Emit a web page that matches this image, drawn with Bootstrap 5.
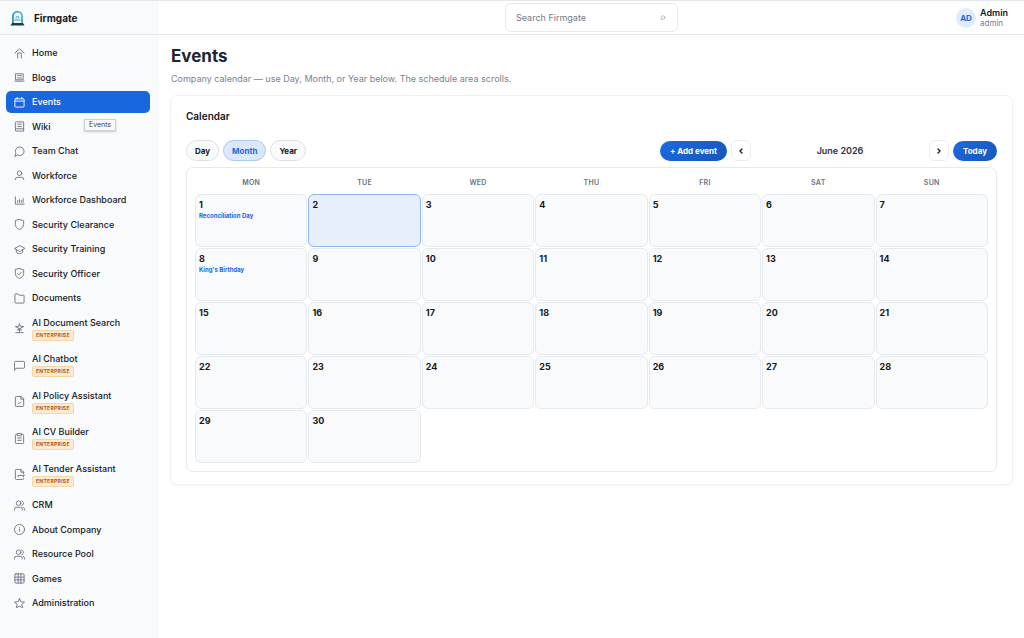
<!DOCTYPE html>
<html lang="en">
<head>
<meta charset="utf-8">
<meta name="viewport" content="width=device-width, initial-scale=1">
<title>Firmgate – Events</title>
<link href="https://cdn.jsdelivr.net/npm/bootstrap@5.3.0/dist/css/bootstrap.min.css" rel="stylesheet">
<style>
  :root { --fg-blue: #1967df; --fg-line: #e6e9ed; --fg-soft: #f8fafc; --fg-ink: #15181e; --fg-mute: #7a8290; }
  body { font-family: Inter, "Liberation Sans", sans-serif; font-size: 9px; line-height: 12px; color: var(--fg-ink); background: #fff; }
  a { color: inherit; text-decoration: none; }
  .app-shell { border-top: 1px solid #e4e5e8; }
  .side-col { width: 159px; background: var(--fg-soft); }
  .top-strip { height: 34px; border-bottom: 1px solid var(--fg-line); }
  .brand-link { font-size: 10px; font-weight: 700; gap: 9px; padding-left: 10px; }
  .side-nav { padding: 7px 9px 24px 6px; }
  .side-item { position: relative; display: flex; align-items: center; gap: 6px; height: 22px; padding-left: 7px; border-radius: 5px; font-weight: 500; }
  .side-item.tall { height: 34px; }
  .side-item.current { background: var(--fg-blue); color: #fff; }
  .side-item svg { width: 13px; height: 13px; padding: 1px; flex: none; stroke: #6b7484; }
  .side-item.current svg { stroke: #fff; }
  svg.line-icon { fill: none; stroke-width: 2; stroke-linecap: round; stroke-linejoin: round; }
  .plan-tag { display: block; width: fit-content; margin-top: 1px; padding: 0 3px; border: 1px solid #f8d5a5; border-radius: 2px; background: #feebcf; color: #b9530f; font-size: 5px; line-height: 9px; font-weight: 700; letter-spacing: .3px; }
  .hover-tip { position: absolute; left: 78px; top: 28px; z-index: 2; padding: 0 4px; border: 1px solid #cfd1d4; background: #f8f8f8; color: #444; font-size: 7px; line-height: 10px; font-weight: 400; box-shadow: 0 1px 2px #0003; }
  .search-box { width: 173px; height: 29px; border: 1px solid var(--fg-line); border-radius: 6px; padding: 0 11px 0 10px; }
  .search-box input { min-width: 0; border: 0; outline: 0; background: none; color: var(--fg-ink); }
  .search-box input::placeholder { color: #747b87; opacity: 1; }
  .search-box svg { width: 7px; height: 7px; stroke: #8b919b; }
  .user-box { gap: 4px; padding-right: 16px; line-height: 10px; }
  .user-pic { width: 20px; height: 20px; border-radius: 50%; background: #e0ecfd; color: #2268d8; font-size: 8px; font-weight: 700; }
  .user-role { font-size: 8px; color: var(--fg-mute); }
  .page-area { padding: 9px 11px 24px 11px; }
  .page-intro { padding-left: 1px; margin-bottom: 10px; }
  h1 { margin-bottom: 5px; font-size: 17px; line-height: 24px; font-weight: 700; color: #1c2436; }
  .intro { color: var(--fg-mute); }
  .panel-card { border: 1px solid #eff1f4; border-radius: 7px; padding: 12px 15px; box-shadow: 0 1px 2px #1018280a; }
  h2 { font-size: 10px; line-height: 16px; font-weight: 600; }
  .pill { height: 21px; padding: 0 8px; border: 1px solid #dde1e7; border-radius: 11px; background: var(--fg-soft); color: var(--fg-ink); font-size: 8px; line-height: 12px; font-weight: 700; }
  .pill.picked { background: #dbe8fb; border-color: #a9c8f4; color: var(--fg-blue); }
  .pill.solid { height: 20px; padding: 0 10px; border: 0; background: linear-gradient(135deg, #1c69e0, #1757b8); color: #fff; }
  .step { width: 20px; height: 21px; padding: 0; border: 1px solid #eaecf0; border-radius: 6px; background: #fff; }
  .step svg { width: 8px; height: 8px; stroke: #15181e; stroke-width: 4; }
  .month-name { width: 170px; font-size: 9px; font-weight: 600; color: #2b3242; }
  .view-bar { margin: 16px 0 6px; }
  .month-frame { border: 1px solid var(--fg-line); border-radius: 7px; padding: 7px; }
  .month-grid { width: 100%; table-layout: fixed; border-collapse: separate; border-spacing: 1px; }
  .month-grid th { height: 17px; padding: 0 0 3px; text-align: center; font-size: 7px; line-height: 12px; font-weight: 600; letter-spacing: .3px; color: #6b7280; }
  .month-grid td { height: 53px; padding: 4px 3px; vertical-align: top; border: 1px solid var(--fg-line); border-radius: 6px; background: var(--fg-soft); font-weight: 700; }
  .month-grid td.today { background: #e7effd; border-color: #8fb6f0; }
  .month-grid td:empty { visibility: hidden; }
  .month-grid a { display: block; color: var(--fg-blue); font-size: 6px; line-height: 10px; }
</style>
<script src="https://cdn.jsdelivr.net/npm/bootstrap@5.3.0/dist/js/bootstrap.bundle.min.js"></script>
</head>
<body>
<div class="app-shell d-flex min-vh-100">
  <aside class="side-col d-flex flex-column flex-shrink-0">
    <div class="top-strip d-flex align-items-center flex-shrink-0">
      <a class="brand-link d-flex align-items-center" href="#">
        <svg width="15" height="17" viewBox="0 0 30 34" fill="none">
          <defs><linearGradient id="arch" x1="0" y1="1" x2="1" y2="0"><stop stop-color="#2389a6"/><stop offset="1" stop-color="#35c3dc"/></linearGradient></defs>
          <path d="M6 28V14a9 9 0 0 1 18 0v14" stroke="url(#arch)" stroke-width="3.500" fill="#f2fbfd"/>
          <path d="M12 19v-1a3 3 0 0 1 6 0v1M9 22h12" stroke="#2e9fc0" stroke-width="2"/>
          <path d="M4 28h22l3 5H1z" fill="#1f3c4f"/>
        </svg>
        <span>Firmgate</span>
      </a>
    </div>
    <nav class="side-nav d-flex flex-column justify-content-between flex-fill" aria-label="Main">
      <a class="side-item" href="#"><svg class="line-icon" viewBox="0 0 24 24"><path d="M2 11 12 2l10 9M8 22V11h8v11"/></svg>Home</a>
      <a class="side-item" href="#"><svg class="line-icon" viewBox="0 0 24 24"><path d="M4 4h16v13H4zM8 8h8M8 13h8M2 20h20"/></svg>Blogs</a>
      <a class="side-item current" href="#" aria-current="page"><svg class="line-icon" viewBox="0 0 24 24"><rect x="2" y="4" width="20" height="18" rx="2"/><path d="M2 9h20M7 1v3M17 1v3"/></svg>Events<span class="hover-tip" role="tooltip">Events</span></a>
      <a class="side-item" href="#"><svg class="line-icon" viewBox="0 0 24 24"><path d="M21 17V2H5a2 2 0 0 0-2 2v16a2 2 0 0 0 2 2h16v-5H5a2 2 0 0 0-2 2M8 7h8M8 12h8"/></svg>Wiki</a>
      <a class="side-item" href="#"><svg class="line-icon" viewBox="0 0 24 24"><path d="M2 22l2-6A9.500 9.500 0 1 1 8 20z"/></svg>Team Chat</a>
      <a class="side-item" href="#"><svg class="line-icon" viewBox="0 0 24 24"><circle cx="12" cy="7" r="5"/><path d="M3 21v-1a4 4 0 0 1 4-4h10a4 4 0 0 1 4 4v1"/></svg>Workforce</a>
      <a class="side-item" href="#"><svg class="line-icon" viewBox="0 0 24 24"><path d="M3 4v16h19M8 16v-4M12 16V10M16 16v-4M20 16V8"/></svg>Workforce Dashboard</a>
      <a class="side-item" href="#"><svg class="line-icon" viewBox="0 0 24 24"><path d="M12 1l9 3v8c0 5-4 9-9 11-5-2-9-6-9-11V4z"/></svg>Security Clearance</a>
      <a class="side-item" href="#"><svg class="line-icon" viewBox="0 0 24 24"><path d="M12 4 1 10l11 6 11-6zM5 12v6c4 4 10 4 14 0v-6"/></svg>Security Training</a>
      <a class="side-item" href="#"><svg class="line-icon" viewBox="0 0 24 24"><path d="M12 1l9 3v8c0 5-4 9-9 11-5-2-9-6-9-11V4zM8 12l3 3 5-6"/></svg>Security Officer</a>
      <a class="side-item" href="#"><svg class="line-icon" viewBox="0 0 24 24"><path d="M2 3a1 1 0 0 1 1-1h6l3 3h9a1 1 0 0 1 1 1v14a2 2 0 0 1-2 2H4a2 2 0 0 1-2-2z"/></svg>Documents</a>
      <a class="side-item tall" href="#"><svg class="line-icon" viewBox="0 0 24 24"><path d="M12 2l2 5 7 1-7 3 2 5-4-3-4 3 2-5-7-3 7-1zM12 13v7M4 21h16"/></svg><span>AI Document Search<span class="plan-tag">ENTERPRISE</span></span></a>
      <a class="side-item tall" href="#"><svg class="line-icon" viewBox="0 0 24 24"><path d="M1 22V5a2 2 0 0 1 2-2h18a2 2 0 0 1 2 2v11a2 2 0 0 1-2 2H5z"/></svg><span>AI Chatbot<span class="plan-tag">ENTERPRISE</span></span></a>
      <a class="side-item tall" href="#"><svg class="line-icon" viewBox="0 0 24 24"><path d="M15 1H5a2 2 0 0 0-2 2v18a2 2 0 0 0 2 2h14a2 2 0 0 0 2-2V7zv6h6M9 15l2 2 4-4"/></svg><span>AI Policy Assistant<span class="plan-tag">ENTERPRISE</span></span></a>
      <a class="side-item tall" href="#"><svg class="line-icon" viewBox="0 0 24 24"><path d="M8 3H5a2 2 0 0 0-2 2v16a2 2 0 0 0 2 2h14a2 2 0 0 0 2-2V5a2 2 0 0 0-2-2h-3M8 1h8v5H8zM8 11h8M8 16h8"/></svg><span>AI CV Builder<span class="plan-tag">ENTERPRISE</span></span></a>
      <a class="side-item tall" href="#"><svg class="line-icon" viewBox="0 0 24 24"><path d="M21 11V7l-6-6H5a2 2 0 0 0-2 2v18a2 2 0 0 0 2 2h14a2 2 0 0 0 2-2v-1M15 1v6h6M9 17v-3h14l-3 3"/></svg><span>AI Tender Assistant<span class="plan-tag">ENTERPRISE</span></span></a>
      <a class="side-item" href="#"><svg class="line-icon" viewBox="0 0 24 24"><circle cx="10" cy="7" r="5"/><path d="M1 22v-2a4 4 0 0 1 4-4h9a4 4 0 0 1 4 4v2M17 2c5 1 5 9 0 10M20 16c2 0 3 2 3 6"/></svg>CRM</a>
      <a class="side-item" href="#"><svg class="line-icon" viewBox="0 0 24 24"><circle cx="12" cy="12" r="11"/><path d="M12 11v5M12 8v.1"/></svg>About Company</a>
      <a class="side-item" href="#"><svg class="line-icon" viewBox="0 0 24 24"><circle cx="10" cy="7" r="5"/><path d="M1 22v-2a4 4 0 0 1 4-4h9a4 4 0 0 1 4 4v2M17 2c5 1 5 9 0 10M20 16c2 0 3 2 3 6"/></svg>Resource Pool</a>
      <a class="side-item" href="#"><svg class="line-icon" viewBox="0 0 24 24"><rect x="2" y="2" width="20" height="20" rx="2"/><path d="M2 9h20M2 15h20M9 2v20M15 2v20"/></svg>Games</a>
      <a class="side-item" href="#"><svg class="line-icon" viewBox="0 0 24 24"><path d="M12 1l3 7 8 1-6 5 2 7-7-3-7 3 2-7-6-5 8-1z"/></svg>Administration</a>
    </nav>
  </aside>
  <div class="flex-fill d-flex flex-column">
    <header class="top-strip row g-0 align-items-center">
      <div class="col"></div>
      <form class="search-box d-flex align-items-center col-auto" role="search">
        <input class="flex-fill p-0" type="text" placeholder="Search Firmgate" aria-label="Search Firmgate">
        <svg class="line-icon" viewBox="0 0 24 24"><circle cx="14" cy="12" r="6"/><path d="M9 16l-4 4"/></svg>
      </form>
      <div class="col d-flex justify-content-end">
        <a class="user-box d-flex align-items-center" href="#">
          <span class="user-pic d-flex align-items-center justify-content-center">AD</span>
          <span><span class="d-block fw-semibold">Admin</span><span class="user-role d-block">admin</span></span>
        </a>
      </div>
    </header>
    <main class="page-area">
      <div class="page-intro">
        <h1>Events</h1>
        <p class="intro mb-0">Company calendar — use Day, Month, or Year below. The schedule area scrolls.</p>
      </div>
      <section class="panel-card">
        <h2 class="mb-0">Calendar</h2>
        <div class="view-bar d-flex align-items-center justify-content-between">
          <div class="d-flex gap-1">
            <button type="button" class="pill">Day</button>
            <button type="button" class="pill picked" aria-pressed="true">Month</button>
            <button type="button" class="pill">Year</button>
          </div>
          <div class="d-flex align-items-center gap-1">
            <button type="button" class="pill solid">+ Add event</button>
            <button type="button" class="step" aria-label="Previous month"><svg class="line-icon" viewBox="0 0 24 24"><path d="M15 6l-6 6 6 6"/></svg></button>
            <span class="month-name text-center">June 2026</span>
            <button type="button" class="step" aria-label="Next month"><svg class="line-icon" viewBox="0 0 24 24"><path d="M9 6l6 6-6 6"/></svg></button>
            <button type="button" class="pill solid">Today</button>
          </div>
        </div>
        <div class="month-frame">
          <table class="month-grid">
            <thead><tr><th>MON</th><th>TUE</th><th>WED</th><th>THU</th><th>FRI</th><th>SAT</th><th>SUN</th></tr></thead>
            <tbody>
              <tr><td>1<a href="#">Reconciliation Day</a></td><td class="today">2</td><td>3</td><td>4</td><td>5</td><td>6</td><td>7</td></tr>
              <tr><td>8<a href="#">King's Birthday</a></td><td>9</td><td>10</td><td>11</td><td>12</td><td>13</td><td>14</td></tr>
              <tr><td>15</td><td>16</td><td>17</td><td>18</td><td>19</td><td>20</td><td>21</td></tr>
              <tr><td>22</td><td>23</td><td>24</td><td>25</td><td>26</td><td>27</td><td>28</td></tr>
              <tr><td>29</td><td>30</td><td></td><td></td><td></td><td></td><td></td></tr>
            </tbody>
          </table>
        </div>
      </section>
    </main>
  </div>
</div>
</body>
</html>
